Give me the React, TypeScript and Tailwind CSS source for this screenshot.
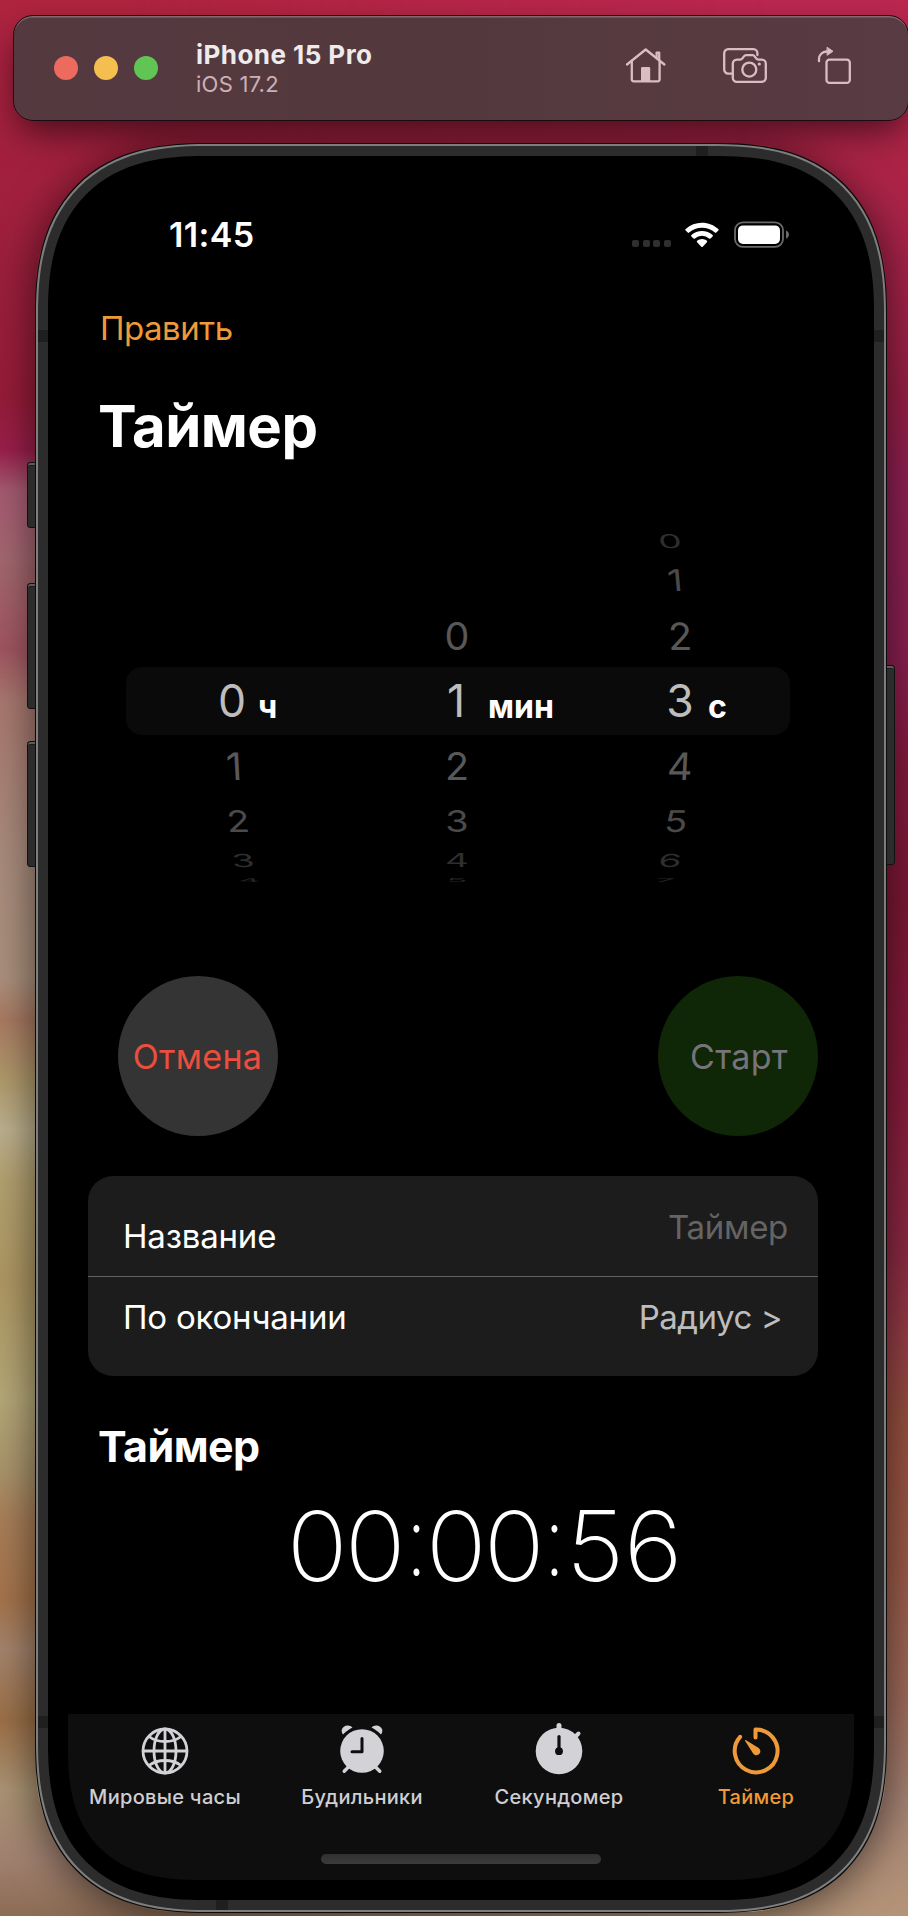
import React from "react";

type Digit = { value: string; x: number; skew: number };

/* Vertical geometry of the wheel: row height, vertical squash and tint, from top to bottom. */
const wheelRows = [
  { height: 28, scaleY: 0.45, scaleX: 0.88, color: "#2e2e2e" },
  { height: 50, scaleY: 0.71, scaleX: 0.9, color: "#4a4a4a" },
  { height: 62, scaleY: 0.9, scaleX: 0.94, color: "#585858" },
  { height: 68, scaleY: 1.08, scaleX: 1.06, color: "#bdbdbd" },
  { height: 62, scaleY: 0.9, scaleX: 0.94, color: "#585858" },
  { height: 48, scaleY: 0.71, scaleX: 0.9, color: "#4a4a4a" },
  { height: 32, scaleY: 0.43, scaleX: 0.88, color: "#2e2e2e" },
  { height: 6, scaleY: 0.12, scaleX: 0.82, color: "#262626" },
];

const wheels: { unit: string; unitClass: string; digits: (Digit | null)[] }[] = [
  {
    unit: "ч",
    unitClass: "left-[210px]",
    digits: [
      null,
      null,
      null,
      { value: "0", x: 184, skew: 0 },
      { value: "1", x: 186, skew: 3 },
      { value: "2", x: 190, skew: 5 },
      { value: "3", x: 195, skew: 8 },
      { value: "4", x: 201, skew: 20 },
    ],
  },
  {
    unit: "мин",
    unitClass: "left-[440px]",
    digits: [
      null,
      null,
      { value: "0", x: 409, skew: 0 },
      { value: "1", x: 408, skew: 0 },
      { value: "2", x: 409, skew: 0 },
      { value: "3", x: 409, skew: 0 },
      { value: "4", x: 409, skew: 0 },
      { value: "5", x: 409, skew: 0 },
    ],
  },
  {
    unit: "с",
    unitClass: "left-[660px]",
    digits: [
      { value: "0", x: 622, skew: 8 },
      { value: "1", x: 627, skew: 5 },
      { value: "2", x: 632, skew: 2 },
      { value: "3", x: 632, skew: 0 },
      { value: "4", x: 632, skew: -3 },
      { value: "5", x: 628, skew: -5 },
      { value: "6", x: 622, skew: -8 },
      { value: "7", x: 617, skew: -20 },
    ],
  },
];

function HomeIcon() {
  return (
    <svg width="42" height="38" viewBox="0 0 42 38" fill="none" stroke="#dcbcc4" strokeWidth="2.3" strokeLinecap="round" strokeLinejoin="round">
      <path d="M2 17.5 20.7 2.5 39.4 17.5" />
      <path d="M6.8 14v18.3a2 2 0 0 0 2 2h23.8a2 2 0 0 0 2-2V14" />
      <path d="M31.6 11V5.6h2.6v7.6" />
      <path d="M16 21.3a1.4 1.4 0 0 1 1.4-1.4h6.4a1.4 1.4 0 0 1 1.4 1.4V34H16z" fill="#dcbcc4" stroke="none" />
    </svg>
  );
}

function ScreenshotIcon() {
  return (
    <svg width="46" height="38" viewBox="0 0 46 38" fill="none" stroke="#dcbcc4" strokeWidth="2.3" strokeLinecap="round" strokeLinejoin="round">
      <path d="M10 26.6H6.2A4 4 0 0 1 2.2 22.6V6.2a4 4 0 0 1 4-4h25.2a4 4 0 0 1 4 4V8" />
      <path d="M14.8 12.6h3.4c1 0 1.6-.4 2.2-1.2l1.5-2c.6-.8 1.2-1.2 2.2-1.2h6.4c1 0 1.6.4 2.2 1.2l1.5 2c.6.8 1.2 1.2 2.2 1.2h3.4a4 4 0 0 1 4 4v14.2a4 4 0 0 1-4 4H14.8a4 4 0 0 1-4-4V16.600a4 4 0 0 1 4-4z" />
      <circle cx="27.300" cy="22.600" r="7" />
      <circle cx="37.300" cy="17" r="1.600" fill="#dcbcc4" stroke="none" />
    </svg>
  );
}

function RotateIcon() {
  return (
    <svg width="36" height="40" viewBox="0 0 36 40" fill="none" stroke="#dcbcc4" strokeWidth="2.3" strokeLinecap="round" strokeLinejoin="round">
      <rect x="9.500" y="13.600" width="23.300" height="23.300" rx="3" />
      <path d="M2 15.200V13a7.500 7.500 0 0 1 7.500-7.500H11" />
      <path d="M10.400 1.500 16 5.300l-5.600 3.800z" fill="#dcbcc4" strokeWidth="1" />
    </svg>
  );
}

function WifiIcon() {
  return (
    <svg width="34" height="26" viewBox="0 0 34 26" fill="#fff">
      <path d="M17 .8c6.300 0 12 2.400 16.300 6.300.5.400.5 1.100 0 1.500l-2 2c-.4.400-1 .4-1.400 0A19.200 19.200 0 0 0 17 5.700 19.200 19.200 0 0 0 4.100 10.600c-.4.400-1 .4-1.400 0l-2-2c-.5-.4-.5-1.100 0-1.500A24.200 24.200 0 0 1 17 .8z" />
      <path d="M17 9c4 0 7.700 1.500 10.600 4 .4.400.4 1 0 1.400l-2.100 2.100c-.4.400-1 .4-1.400 0A11 11 0 0 0 17 13.800a11 11 0 0 0-7.100 2.700c-.4.400-1 .4-1.400 0l-2.100-2.100c-.4-.4-.4-1 0-1.400A16 16 0 0 1 17 9z" />
      <path d="M17 17c1.900 0 3.600.7 4.900 1.800.4.400.4 1 0 1.400l-4.200 4.600c-.4.400-1 .4-1.400 0l-4.200-4.600c-.4-.4-.4-1 0-1.400A7.500 7.500 0 0 1 17 17z" />
    </svg>
  );
}

function BatteryIcon() {
  return (
    <svg width="56" height="28" viewBox="0 0 56 28" fill="none">
      <rect x="1" y="1.300" width="48" height="24.600" rx="8" stroke="#6a6a6a" strokeWidth="1.800" />
      <rect x="4" y="4.400" width="42" height="18.600" rx="5" fill="#fff" />
      <path d="M52 9.500c1.800.6 3 2.200 3 4.100s-1.200 3.500-3 4.100z" fill="#6a6a6a" />
    </svg>
  );
}

function GlobeIcon() {
  return (
    <svg width="56" height="56" viewBox="0 0 56 56" fill="none" stroke="#d3d2d7" strokeWidth="2.800">
      <circle cx="28" cy="28" r="22" />
      <ellipse cx="28" cy="28" rx="11" ry="22" />
      <path d="M28 6v44M6 28h44" />
      <path d="M12 13.500c4.300 3.400 9.800 5 16 5s11.700-1.600 16-5M12 42.500c4.300-3.400 9.800-5 16-5s11.700 1.600 16 5" />
    </svg>
  );
}

function AlarmIcon() {
  return (
    <svg width="56" height="56" viewBox="0 0 56 56" fill="none">
      <path d="M9 11.500C7.800 10 7.400 8.300 7.800 6.500 8.500 4 11 2.300 13.800 2.400c2 .1 3.600.8 4.700 2.200C14.800 6.500 11.600 8.900 9 11.500zM47 11.500c1.200-1.500 1.600-3.200 1.200-5-.7-2.500-3.200-4.200-6-4.100-2 .1-3.600.8-4.700 2.200 3.700 1.900 6.900 4.300 9.500 6.900z" fill="#d3d2d7" />
      <circle cx="28" cy="28" r="21.800" fill="#d3d2d7" />
      <path d="m14.500 44-4.300 4.300M41.500 44l4.300 4.300" stroke="#d3d2d7" strokeWidth="3.400" strokeLinecap="round" />
      <path d="M28 15.500v13.200H18" stroke="#0e0e0e" strokeWidth="3" strokeLinecap="round" strokeLinejoin="round" />
    </svg>
  );
}

function StopwatchIcon() {
  return (
    <svg width="56" height="56" viewBox="0 0 56 56" fill="none">
      <circle cx="28" cy="28" r="23.300" fill="#d3d2d7" />
      <path d="M28 2.500V8" stroke="#d3d2d7" strokeWidth="5" strokeLinecap="round" />
      <path d="m44 14 3.500-3.500" stroke="#d3d2d7" strokeWidth="4" strokeLinecap="round" />
      <path d="M28 13.500v14" stroke="#0e0e0e" strokeWidth="3.200" strokeLinecap="round" />
      <circle cx="28" cy="28.200" r="3.900" fill="#0e0e0e" />
    </svg>
  );
}

function TimerIcon() {
  return (
    <svg width="56" height="56" viewBox="0 0 56 56" fill="none" stroke="#ee9a38" strokeWidth="4" strokeLinecap="round" strokeLinejoin="round">
      <path d="M27.500 14.500V6.600A21.400 21.400 0 1 1 12.100 13.800" />
      <path d="M17 17.700c-.3-.5.200-1 .7-.7l12.600 7.700c2.300 1.400 2.700 4.300 1.200 6.100-1.800 2-4.900 1.800-6.400-.4z" fill="#ee9a38" stroke="none" />
    </svg>
  );
}

const tabs = [
  { label: "Мировые часы", icon: <GlobeIcon />, active: false },
  { label: "Будильники", icon: <AlarmIcon />, active: false },
  { label: "Секундомер", icon: <StopwatchIcon />, active: false },
  { label: "Таймер", icon: <TimerIcon />, active: true },
];

function Wallpaper() {
  return (
    <div className="absolute inset-0">
      <div className="absolute inset-0 bg-[linear-gradient(180deg,#b0243f_0px,#a8213f_80px,#9c1f3c_260px,#961c39_400px,#9a1f4b_450px,#a55a72_490px,#a3686f_560px,#a05560_650px,#a8786f_700px,#a88c7c_860px,#ab907c_980px,#a97a62_1020px,#b09a6c_1080px,#bcb08e_1130px,#b3a170_1180px,#ae9763_1280px,#b5a878_1400px,#aa946c_1470px,#a87e58_1520px,#a5744c_1600px,#a4846c_1650px,#9c7048_1720px,#ab9474_1790px,#a08070_1860px,#8c6c54_1916px)]" />
      <div className="absolute inset-0 bg-[linear-gradient(180deg,#bb2750_0px,#ac2446_160px,#a4224a_300px,#981f45_400px,#8e2055_490px,#8a2050_650px,#82193e_760px,#7c1836_900px,#8a1c3e_1100px,#8d2a44_1250px,#963e46_1340px,#97503f_1420px,#9c5a48_1560px,#a06c5c_1700px,#a68474_1800px,#b49478_1916px)] [mask-image:linear-gradient(90deg,transparent_15%,black_85%)]" />
    </div>
  );
}

function Toolbar() {
  return (
    <div className="relative z-10 mt-[15px] ml-[13px] flex h-[106px] w-[896px] items-center rounded-[20px] border border-[#1c0a10] bg-[linear-gradient(90deg,#543a40,#53393d_50%,#593b43)] shadow-[inset_0_2px_0_-0.500px_#83696e,0_16px_36px_-6px_rgba(0,0,0,0.6)]">
      <div className="ml-[40px] flex gap-[16px]">
        <span className="size-[24px] rounded-full bg-[#ec6a5e]" />
        <span className="size-[24px] rounded-full bg-[#f4bf4f]" />
        <span className="size-[24px] rounded-full bg-[#61c554]" />
      </div>
      <div className="mt-[2px] ml-[38px] w-[240px] whitespace-nowrap">
        <div className="text-[26px] leading-[30px] font-bold tracking-[0.45px] text-[#eeebec]">iPhone 15 Pro</div>
        <div className="text-[22px] leading-[29px] tracking-[0.25px] text-[#cdb0b6]">iOS 17.2</div>
      </div>
      <div className="ml-auto flex items-center pr-[55px] pb-[4px]">
        <HomeIcon />
        <span className="w-[55px]" />
        <ScreenshotIcon />
        <span className="w-[49px]" />
        <RotateIcon />
      </div>
    </div>
  );
}

function StatusBar() {
  return (
    <div className="flex h-[158px] items-center pr-[84px] pl-[121px]">
      <span className="text-[34px] leading-none font-semibold tracking-[0.4px]">11:45</span>
      <div className="ml-auto flex items-center">
        <span className="mt-[17px] mr-[14px] flex gap-[3.700px]">
          <i className="size-[7px] rounded-[2px] bg-[#2f2f2f]" />
          <i className="size-[7px] rounded-[2px] bg-[#2f2f2f]" />
          <i className="size-[7px] rounded-[2px] bg-[#2f2f2f]" />
          <i className="size-[7px] rounded-[2px] bg-[#2f2f2f]" />
        </span>
        <WifiIcon />
        <span className="w-[15px]" />
        <BatteryIcon />
      </div>
    </div>
  );
}

function Picker() {
  return (
    <div className="relative mt-[17px] h-[356px]">
      <div className="absolute top-[140px] left-[78px] h-[68px] w-[664px] rounded-[16px] bg-[#0a0a0a]" />
      {wheels.map((wheel) => (
        <div key={wheel.unit} className="absolute inset-0">
          {wheel.digits.map((digit, row) => (
            <div key={row} className="relative" style={{ height: wheelRows[row].height }}>
              {digit && (
                <span
                  className="absolute top-1/2 flex h-[44px] w-[44px] items-center justify-center text-[42px] leading-none font-normal"
                  style={{
                    left: digit.x,
                    color: wheelRows[row].color,
                    transform: `translate(-50%, -50%) skewX(${digit.skew}deg) scale(${wheelRows[row].scaleX}, ${wheelRows[row].scaleY})`,
                  }}
                >
                  {digit.value}
                </span>
              )}
            </div>
          ))}
          <span className={`absolute top-[146px] text-[32px] leading-[68px] font-bold ${wheel.unitClass}`}>{wheel.unit}</span>
        </div>
      ))}
    </div>
  );
}

function SettingsCard() {
  return (
    <div className="mt-[40px] ml-[40px] h-[200px] w-[730px] rounded-[25px] bg-[#1c1c1c] text-[33px] leading-none tracking-[-0.2px]">
      <div className="flex h-[100px] justify-between pr-[30px] pl-[35px]">
        <span className="mt-[44px]">Название</span>
        <span className="mt-[35px] tracking-[-0.3px] text-[#646464]">Таймер</span>
      </div>
      <div className="flex h-[100px] justify-between border-t border-[#606060] pr-[36px] pl-[35px]">
        <span className="mt-[24px]">По окончании</span>
        <span className="mt-[24px] tracking-[-0.5px] text-[#bdbdbd]">Радиус &gt;</span>
      </div>
    </div>
  );
}

function Clock({ value }: { value: string }) {
  return (
    <div className="flex h-[58px] pl-[240px] text-[97px] leading-[58px] font-extralight">
      {value.split("").map((char, index) =>
        char === ":" ? (
          <span key={index} className="-mt-[5px] flex w-[21.800px] justify-center">
            <span className="scale-x-[0.78]">{char}</span>
          </span>
        ) : (
          <span key={index} className="flex w-[58.500px] justify-center">
            <span className="scale-x-[1.04]">{char}</span>
          </span>
        ),
      )}
    </div>
  );
}

function TabBar() {
  return (
    <div className="relative mt-[139px] ml-[20px] h-[166px] w-[786px] rounded-b-[109px] bg-[#0e0e0e] supports-[corner-shape:squircle]:rounded-b-[130px] supports-[corner-shape:squircle]:[corner-shape:superellipse(1.3)]">
      <div className="-ml-[2px] flex pt-[9px]">
        {tabs.map((tab) => (
          <div key={tab.label} className={`flex w-[197px] shrink-0 flex-col items-center whitespace-nowrap text-[20px] leading-none font-medium tracking-[0.3px] ${tab.active ? "text-[#ee9a38]" : "text-[#cfced3]"}`}>
            {tab.icon}
            <span className="mt-[8px] ml-[1px]">{tab.label}</span>
          </div>
        ))}
      </div>
      <div className="absolute bottom-[16px] left-[253px] h-[10px] w-[280px] rounded-full bg-[linear-gradient(180deg,#313131,#3b3b3b)]" />
    </div>
  );
}

function SideButton({ className }: { className: string }) {
  return <div className={`absolute border border-[#111] bg-[#2c2c2c] shadow-[inset_0_2px_0_#5c5c5c,inset_0_3px_0_#1c1c1c] ${className}`} />;
}

function Phone() {
  return (
    <div className="relative mt-[23px] ml-[36px] h-[1768px] w-[850px]">
      <SideButton className="top-[318px] left-[-9px] z-10 h-[66px] w-[12px] rounded-l-[3px]" />
      <SideButton className="top-[439px] left-[-9px] z-10 h-[126px] w-[12px] rounded-l-[3px]" />
      <SideButton className="top-[597px] left-[-9px] z-10 h-[126px] w-[12px] rounded-l-[3px]" />
      <SideButton className="top-[521px] right-[-9px] z-10 h-[200px] w-[12px] rounded-r-[3px]" />
      <div className="absolute inset-0 rounded-[143px] shadow-[0_6px_44px_rgba(0,0,0,0.6)]" />
      <div className="relative z-20 h-full overflow-hidden rounded-[143px] border-2 border-[#7e7e7e] bg-[#2c2c2c] p-[10px] shadow-[0_0_0_1px_#0a0a0a] supports-[corner-shape:squircle]:rounded-[170px] supports-[corner-shape:squircle]:[corner-shape:superellipse(1.3)]">
        <i className="absolute top-[184px] left-0 h-[12px] w-full bg-[#1f1f1f]" />
        <i className="absolute top-[1570px] left-0 h-[12px] w-full bg-[#1f1f1f]" />
        <i className="absolute top-0 left-[658px] h-[12px] w-[12px] bg-[#1f1f1f]" />
        <i className="absolute bottom-0 left-[178px] h-[12px] w-[12px] bg-[#1f1f1f]" />
        <div className="relative h-full overflow-hidden rounded-[130px] bg-black text-white supports-[corner-shape:squircle]:rounded-[156px] supports-[corner-shape:squircle]:[corner-shape:superellipse(1.3)]">
          <StatusBar />
          <div className="h-[28px] pl-[52px] text-[33px] leading-[28px] tracking-[-0.5px] text-[#ee9a38]">Править</div>
          <h1 className="h-[168px] pl-[50px] text-[58px] leading-[168px] font-bold tracking-[-0.5px]">Таймер</h1>
          <Picker />
          <div className="mt-[93px] flex justify-between pr-[56px] pl-[70px] text-[34px] tracking-[0.3px]">
            <button className="size-[160px] rounded-full bg-[#343434] text-[#ec4d3e]">
              <span className="-ml-[1px]">Отмена</span>
            </button>
            <button className="size-[160px] rounded-full bg-[#0f2607] text-[#76747a]">
              <span className="ml-[2px]">Старт</span>
            </button>
          </div>
          <SettingsCard />
          <h2 className="h-[141px] pl-[50px] text-[43px] leading-[141px] font-bold tracking-[-0.55px]">Таймер</h2>
          <Clock value="00:00:56" />
          <TabBar />
        </div>
      </div>
    </div>
  );
}

export default function App() {
  return (
    <div className="relative flow-root h-[1916px] w-[908px] overflow-hidden font-['Inter',sans-serif]">
      <Wallpaper />
      <Toolbar />
      <Phone />
    </div>
  );
}
